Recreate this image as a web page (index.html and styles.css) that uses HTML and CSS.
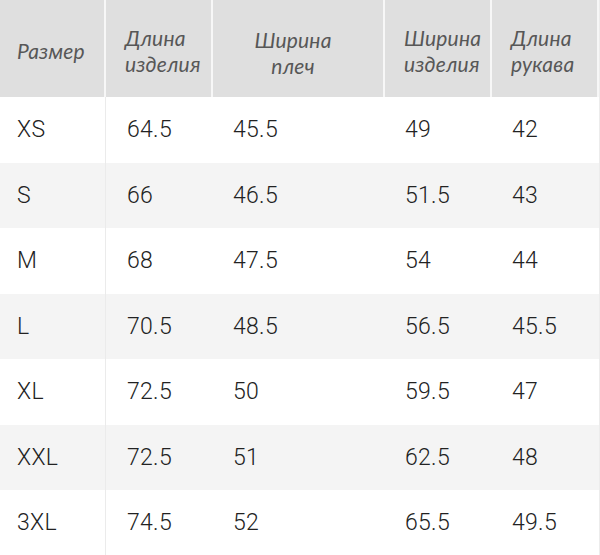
FILE: index.html
```html
<!DOCTYPE html>
<html lang="ru">
<head>
<meta charset="utf-8">
<title>Размеры</title>
<link rel="stylesheet" href="styles.css">
</head>
<body>
<div class="table">
  <div class="row head">
    <div class="cell c1"><span>Размер</span></div>
    <div class="cell c2"><span>Длина<br>изделия</span></div>
    <div class="cell c3 center"><span>Ширина<br>плеч</span></div>
    <div class="cell c4"><span>Ширина<br>изделия</span></div>
    <div class="cell c5"><span>Длина<br>рукава</span></div>
  </div>
  <div class="row"><div class="cell c1">XS</div><div class="cell c2">64.5</div><div class="cell c3">45.5</div><div class="cell c4">49</div><div class="cell c5">42</div></div>
  <div class="row alt"><div class="cell c1">S</div><div class="cell c2">66</div><div class="cell c3">46.5</div><div class="cell c4">51.5</div><div class="cell c5">43</div></div>
  <div class="row"><div class="cell c1">M</div><div class="cell c2">68</div><div class="cell c3">47.5</div><div class="cell c4">54</div><div class="cell c5">44</div></div>
  <div class="row alt"><div class="cell c1">L</div><div class="cell c2">70.5</div><div class="cell c3">48.5</div><div class="cell c4">56.5</div><div class="cell c5">45.5</div></div>
  <div class="row"><div class="cell c1">XL</div><div class="cell c2">72.5</div><div class="cell c3">50</div><div class="cell c4">59.5</div><div class="cell c5">47</div></div>
  <div class="row alt"><div class="cell c1">XXL</div><div class="cell c2">72.5</div><div class="cell c3">51</div><div class="cell c4">62.5</div><div class="cell c5">48</div></div>
  <div class="row"><div class="cell c1">3XL</div><div class="cell c2">74.5</div><div class="cell c3">52</div><div class="cell c4">65.5</div><div class="cell c5">49.5</div></div>
</div>
</body>
</html>
```
FILE: styles.css
```css
html, body {
  margin: 0;
  padding: 0;
  background: #ffffff;
}
.table {
  width: 599px;
  border-right: 1px solid #ececec;
}
.row {
  display: grid;
  grid-template-columns: 106px 107px 172px 107px 107px;
  height: 65.5px;
  background: #ffffff;
}
.row.alt {
  background: #f4f4f4;
}
.row.head {
  height: 97px;
  background: #ffffff;
}
.cell {
  display: flex;
  align-items: center;
  padding-left: 20px;
  font-family: Roboto, "Liberation Sans", sans-serif;
  font-weight: 300;
  font-size: 23px;
  letter-spacing: 0.3px;
  color: #222222;
}
.cell.c1 {
  padding-left: 17px;
  border-right: 1px solid #ebebeb;
}
.cell.c2 {
  padding-left: 21px;
}
.head .cell {
  background: #dfdfdf;
  font-family: Lato, "Noto Sans", sans-serif;
  font-style: italic;
  font-weight: 400;
  font-size: 21px;
  line-height: 26px;
  letter-spacing: 0.2px;
  color: #575757;
  border-right: 2px solid #f7f7f7;
  padding-left: 19px;
  padding-top: 4px;
}
.head .cell.c1 {
  padding-left: 17px;
}
.head .cell.center {
  justify-content: center;
  text-align: center;
  padding-left: 0;
  padding-right: 10px;
  padding-top: 8px;
}
```
